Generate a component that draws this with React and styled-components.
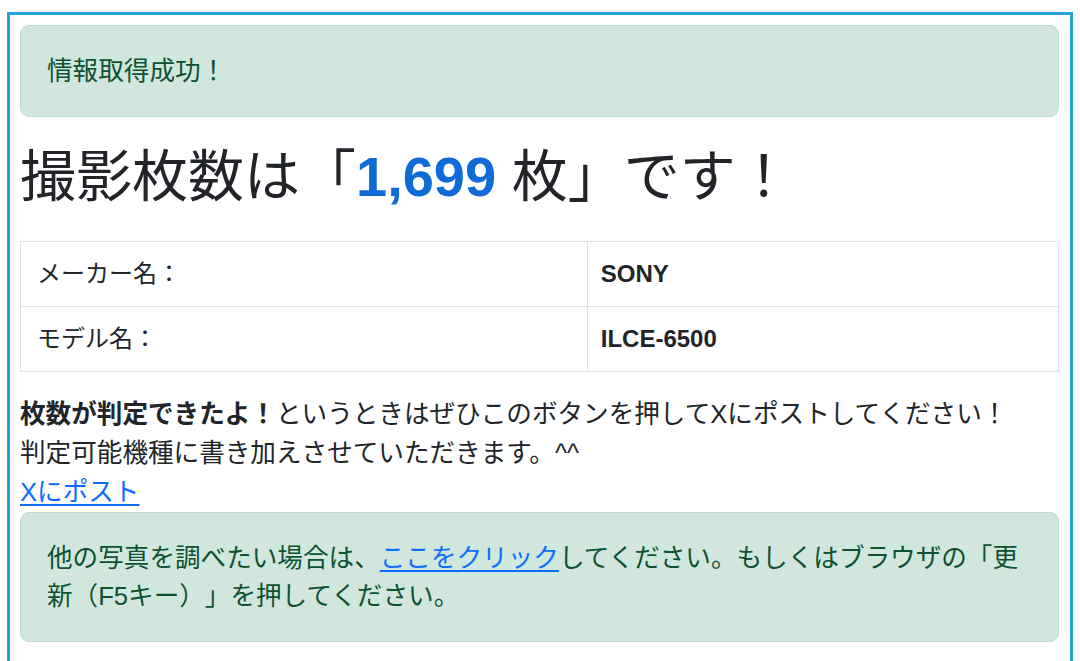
import styled, { createGlobalStyle } from "styled-components";

const GlobalStyle = createGlobalStyle`
  body {
    margin: 0;
    background: #fff;
    color: #212529;
    font-family: "Liberation Sans", "Noto Sans CJK JP", sans-serif;
    font-size: 25.6px;
    line-height: 1.5;
    text-spacing-trim: space-all;
  }
`;

const Frame = styled.div`
  margin: 12px 7px 0 7px;
  border: 3px solid #22a3e0;
  padding: 10px 11px 40px 10px;
`;

const Alert = styled.div`
  background-color: #d1e7dd;
  border: 1px solid #bcdccd;
  border-radius: 9px;
  color: #0f5132;
  padding: 26px 26px;
  margin-bottom: ${(p) => p.$gap || 0}px;
`;

const Title = styled.h1`
  font-size: 56px;
  font-weight: 400;
  line-height: 1.2;
  margin: 0 0 30px;
`;

const Count = styled.strong`
  color: #0f6cd6;
  font-weight: 700;
`;

const InfoTable = styled.table`
  width: 100%;
  border-collapse: collapse;
  margin-bottom: 23px;

  & td {
    border: 1px solid #dee2e6;
    padding: 14px 16px;
    font-size: 24px;
    line-height: 36px;
  }

  & td:first-child {
    width: 54.6%;
  }

  & td:last-child {
    font-weight: 700;
    padding-left: 13px;
  }
`;

const Note = styled.p`
  margin: 0;
  line-height: 39px;
`;

const Link = styled.a`
  color: #0d6efd;
  text-decoration: underline;
  text-underline-offset: 3px;
`;

export default function App() {
  return (
    <>
      <GlobalStyle />
      <Frame>
        <Alert $gap={26}>情報取得成功！</Alert>
        <Title>
          撮影枚数は「<Count>1,699</Count> 枚」です！
        </Title>
        <InfoTable>
          <tbody>
            <tr>
              <td>メーカー名：</td>
              <td>SONY</td>
            </tr>
            <tr>
              <td>モデル名：</td>
              <td>ILCE-6500</td>
            </tr>
          </tbody>
        </InfoTable>
        <Note>
          <b>枚数が判定できたよ！</b>というときはぜひこのボタンを押してXにポストしてください！
          <br />
          判定可能機種に書き加えさせていただきます。^^
          <br />
          <Link href="#">Xにポスト</Link>
        </Note>
        <Alert>
          他の写真を調べたい場合は、<Link href="#">ここをクリック</Link>してください。もしくはブラウザの「更新（F5キー）」を押してください。
        </Alert>
      </Frame>
    </>
  );
}
